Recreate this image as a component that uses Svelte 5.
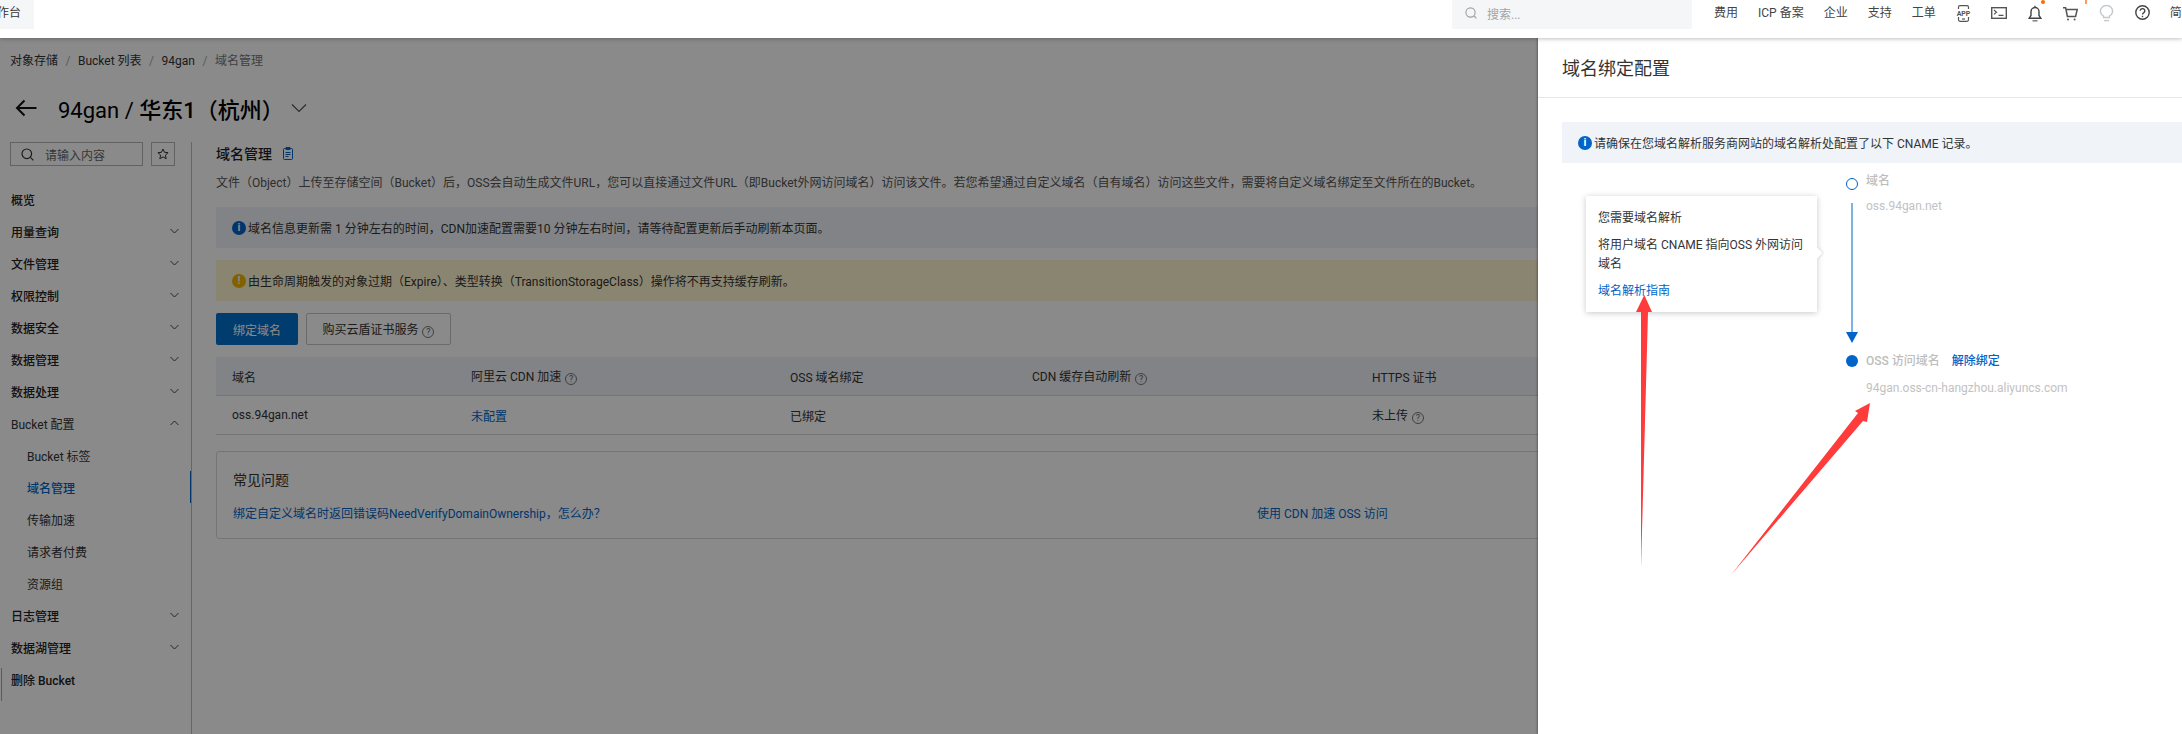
<script>
  const nav = [
    { label: "概览", bold: true },
    { label: "用量查询", bold: true, chevron: "down" },
    { label: "文件管理", bold: true, chevron: "down" },
    { label: "权限控制", bold: true, chevron: "down" },
    { label: "数据安全", bold: true, chevron: "down" },
    { label: "数据管理", bold: true, chevron: "down" },
    { label: "数据处理", bold: true, chevron: "down" },
    { label: "Bucket 配置", chevron: "up" },
    { label: "Bucket 标签", sub: true },
    { label: "域名管理", sub: true, active: true },
    { label: "传输加速", sub: true },
    { label: "请求者付费", sub: true },
    { label: "资源组", sub: true },
    { label: "日志管理", bold: true, chevron: "down" },
    { label: "数据湖管理", bold: true, chevron: "down" },
    { label: "删除 Bucket", bold: true },
  ];

  const topLinks = ["费用", "ICP 备案", "企业", "支持", "工单"];
  const crumbs = ["对象存储", "Bucket 列表", "94gan"];
</script>

<div class="app">
  <header class="topbar">
    <div class="tab"><span>工作台</span></div>
    <div class="search">
      <svg width="12" height="12" viewBox="0 0 12 12" fill="none" stroke="#9aa0a6" stroke-width="1.1">
        <circle cx="5.5" cy="5.5" r="4.6" />
        <path d="M9 9l2.4 2.4" />
      </svg>
      <span>搜索...</span>
    </div>
    <nav class="toplinks">
      {#each topLinks as link}
        <span>{link}</span>
      {/each}
      <svg class="ico" width="15" height="17" viewBox="0 0 15 17" fill="none" stroke="#555" stroke-width="1.2">
        <path d="M2.5 4V2.2Q2.5 .7 4 .7H11Q12.5 .7 12.5 2.2V4M2.5 12V14.8Q2.5 16.3 4 16.3H11Q12.5 16.3 12.5 14.8V12" />
        <path d="M6 14h3" />
        <text x="7.5" y="10.6" text-anchor="middle" class="app-t">APP</text>
      </svg>
      <svg class="ico term" width="16" height="12" viewBox="0 0 16 12" fill="none" stroke="#555" stroke-width="1.4">
        <rect x=".7" y=".7" width="14.6" height="10.6" />
        <path d="M3 3l2.5 2.2L3 7.4M7.5 8.4h5" stroke-width="1.2" />
      </svg>
      <span class="ico-wrap">
        <svg class="ico" width="16" height="17" viewBox="0 0 16 17" fill="none" stroke="#444" stroke-width="1.4">
          <path d="M2.2 13.2h11.6L12 10.5V6.5a4 4 0 0 0-8 0v4zM8 2.5V.8" />
          <path d="M5.5 15.8h5" stroke-width="1.6" stroke="#888" />
        </svg>
        <i class="dot"></i>
      </span>
      <span class="ico-wrap">
        <svg class="ico cart" width="15" height="14" viewBox="0 0 15 14" fill="none" stroke="#555" stroke-width="1.5">
          <path d="M0 .8h2.6l1.8 8.6h8.2L14.2 2.6H3" />
          <circle cx="5" cy="12.4" r="1" fill="#555" stroke="none" />
          <circle cx="11.6" cy="12.4" r="1" fill="#555" stroke="none" />
        </svg>
        <i class="bar"></i>
      </span>
      <svg class="ico" width="17" height="17" viewBox="0 0 17 17" fill="none" stroke="#c3c8cc" stroke-width="1.4">
        <path d="M5.5 12.5V11Q2.4 9.2 2.4 6.2a6 5.6 0 0 1 12.2 0Q14.6 9.2 11.5 11v1.5z" />
        <path d="M6 15.6h5" />
      </svg>
      <svg class="ico" width="15" height="15" viewBox="0 0 15 15" fill="none" stroke="#444" stroke-width="1.4">
        <circle cx="7.5" cy="7.5" r="6.7" />
        <path d="M5.2 5.8a2.3 2.2 0 1 1 3.6 1.9Q7.5 8.5 7.5 9.6" />
        <path d="M7.5 10.8v1.4" />
      </svg>
      <span>简体</span>
    </nav>
  </header>

  <div class="page">
    <div class="crumbs">
      {#each crumbs as c}
        <span>{c}</span><i>/</i>
      {/each}
      <span class="last">域名管理</span>
    </div>

    <div class="title">
      <svg width="22" height="18" viewBox="0 0 22 18" fill="none" stroke="#111" stroke-width="2">
        <path d="M21.5 9H2M9.5 1.5L2 9l7.5 7.5" />
      </svg>
      <h1>94gan / <b>华东1（杭州）</b></h1>
      <svg width="16" height="10" viewBox="0 0 16 10" fill="none" stroke="#555" stroke-width="1.2">
        <path d="M1 1.5l7 7 7-7" />
      </svg>
    </div>

    <div class="main">
      <aside class="side">
        <div class="side-top">
          <div class="side-search">
            <svg width="13" height="13" viewBox="0 0 13 13" fill="none" stroke="#333" stroke-width="1.2">
              <circle cx="5.8" cy="5.8" r="4.8" />
              <path d="M9.4 9.4l3 3" />
            </svg>
            <span>请输入内容</span>
          </div>
          <div class="star">
            <svg width="12" height="12" viewBox="0 0 12 12" fill="none" stroke="#333" stroke-width="1">
              <path d="M6 1l1.5 3.3 3.6.4-2.7 2.4.8 3.6L6 8.9l-3.2 1.8.8-3.6L.9 4.7l3.6-.4z" />
            </svg>
          </div>
        </div>
        <ul>
          {#each nav as item}
            <li class:bold={item.bold} class:sub={item.sub} class:active={item.active}>
              <span>{item.label}</span>
              {#if item.chevron}
                <svg class:up={item.chevron === "up"} width="9" height="6" viewBox="0 0 9 6" fill="none" stroke="#444" stroke-width="1">
                  <path d="M.5 1l4 4 4-4" />
                </svg>
              {/if}
            </li>
          {/each}
        </ul>
      </aside>

      <main class="content">
        <div class="head">
          <h2>域名管理</h2>
          <svg width="10" height="13" viewBox="0 0 10 13" fill="none" stroke="#0064c8" stroke-width="1">
            <rect x=".5" y="1.5" width="9" height="11" rx="1" />
            <path d="M3 .5h4v2H3zM2.5 5.5h5M2.5 7.5h5M2.5 9.5h3" />
          </svg>
        </div>
        <p class="desc">文件（Object）上传至存储空间（Bucket）后，OSS会自动生成文件URL，您可以直接通过文件URL（即Bucket外网访问域名）访问该文件。若您希望通过自定义域名（自有域名）访问这些文件，需要将自定义域名绑定至文件所在的Bucket。</p>

        <div class="notice info">
          <span class="badge blue">i</span>域名信息更新需 1 分钟左右的时间，CDN加速配置需要10 分钟左右时间，请等待配置更新后手动刷新本页面。
        </div>
        <div class="notice warn">
          <span class="badge amber">!</span>由生命周期触发的对象过期（Expire）、类型转换（TransitionStorageClass）操作将不再支持缓存刷新。
        </div>

        <div class="actions">
          <button class="primary">绑定域名</button>
          <button class="plain">购买云盾证书服务 <span class="q">?</span></button>
        </div>

        <div class="table">
          <div class="row th">
            <span>域名</span>
            <span>阿里云 CDN 加速 <span class="q">?</span></span>
            <span>OSS 域名绑定</span>
            <span>CDN 缓存自动刷新 <span class="q">?</span></span>
            <span>HTTPS 证书</span>
          </div>
          <div class="row">
            <span>oss.94gan.net</span>
            <span class="link">未配置</span>
            <span>已绑定</span>
            <span></span>
            <span>未上传 <span class="q">?</span></span>
          </div>
        </div>

        <section class="faq">
          <h3>常见问题</h3>
          <div class="faq-links">
            <span class="link">绑定自定义域名时返回错误码NeedVerifyDomainOwnership，怎么办？</span>
            <span class="link">使用 CDN 加速 OSS 访问</span>
          </div>
        </section>
      </main>
    </div>
  </div>

  <i class="handle"></i>
  <div class="mask"></div>

  <div class="drawer">
    <div class="drawer-head">域名绑定配置</div>
    <div class="drawer-body">
      <div class="notice info small">
        <span class="badge blue">i</span>请确保在您域名解析服务商网站的域名解析处配置了以下 CNAME 记录。
      </div>
      <div class="timeline">
        <span class="ring"></span>
        <strong>域名</strong>
        <svg class="rail" width="12" height="140" viewBox="0 0 12 140">
          <path d="M6 0V130" stroke="#0064c8" stroke-width="1" />
          <path d="M0 129H12L6 140z" fill="#0064c8" />
        </svg>
        <div class="val">oss.94gan.net</div>
        <span class="solid"></span>
        <div class="label2"><strong>OSS 访问域名</strong><a>解除绑定</a></div>
        <span></span>
        <div class="val second">94gan.oss-cn-hangzhou.aliyuncs.com</div>
      </div>
    </div>
    <div class="pop">
      <p>您需要域名解析</p>
      <p>将用户域名 CNAME 指向OSS 外网访问域名</p>
      <p class="link2">域名解析指南</p>
    </div>
  </div>

  <svg class="arrows" width="2182" height="734" viewBox="0 0 2182 734">
    <path d="M1641 568L1641 312H1636L1644.3 295L1652 312H1648z" fill="#ff3b3b" />
    <path d="M1731 575L1858 413L1855 411L1870 403L1867 422L1863 421z" fill="#ff3b3b" />
  </svg>
</div>

<style>
  :global(body) {
    margin: 0;
    background: #fff;
  }

  .app {
    position: relative;
    width: 2182px;
    height: 734px;
    overflow: hidden;
    background: #fff;
    color: #333;
    font-family: Roboto, "Noto Sans CJK SC", sans-serif;
    font-size: 12px;
  }

  /* top bar */
  .topbar {
    position: relative;
    z-index: 3;
    display: flex;
    align-items: flex-start;
    height: 38px;
    background: #fff;
    box-shadow: 0 1px 4px rgba(0, 0, 0, 0.25);
  }

  .tab {
    flex: none;
    display: flex;
    justify-content: flex-end;
    width: 34px;
    height: 29px;
    overflow: hidden;
    background: #f5f6f8;
    line-height: 26px;
    color: #333;
  }

  .tab span {
    flex: none;
    margin-right: 13px;
  }

  .search {
    flex: none;
    display: flex;
    align-items: center;
    gap: 10px;
    box-sizing: border-box;
    width: 240px;
    height: 29px;
    margin-left: 1418px;
    padding-left: 13px;
    padding-bottom: 3px;
    background: #f5f6f8;
    color: #a0a4a8;
  }

  .toplinks {
    flex: none;
    display: flex;
    align-items: flex-start;
    gap: 20px;
    margin-left: 22px;
    white-space: nowrap;
    line-height: 26px;
    color: #444;
  }

  .ico {
    display: block;
    margin-top: 5px;
  }

  .ico.term {
    margin-top: 7px;
  }

  .ico.cart {
    margin-top: 7px;
  }

  .ico-wrap {
    position: relative;
    display: block;
  }

  .app-t {
    font-size: 7px;
    font-weight: 700;
    fill: #555;
    stroke: none;
  }

  .dot {
    position: absolute;
    top: 0;
    left: 14px;
    width: 4px;
    height: 4px;
    border-radius: 50%;
    background: #ff6a00;
  }

  .bar {
    position: absolute;
    top: 0;
    left: 22px;
    width: 2px;
    height: 4px;
    background: #ff9a5c;
  }

  /* page */
  .page {
    padding-top: 14px;
  }

  .crumbs {
    display: flex;
    gap: 7.5px;
    height: 18px;
    padding-left: 10px;
    line-height: 18px;
    color: #333;
  }

  .crumbs i {
    font-style: normal;
    color: #aaa;
  }

  .crumbs .last {
    color: #777;
  }

  .title {
    display: flex;
    align-items: center;
    height: 30px;
    margin-top: 23px;
    padding-left: 15px;
  }

  .title h1 {
    margin: 0 7px 0 21px;
    font-size: 22px;
    font-weight: 400;
    color: #000;
    white-space: nowrap;
  }

  .title b {
    font-weight: 500;
  }

  .main {
    display: flex;
    margin-top: 19px;
    height: 592px;
  }

  .side {
    box-sizing: border-box;
    flex: none;
    width: 192px;
    padding-left: 10px;
    border-right: 1px solid #bdbdbd;
  }

  .side-top {
    display: flex;
    gap: 8px;
  }

  .side-search {
    display: flex;
    align-items: center;
    gap: 11px;
    box-sizing: border-box;
    width: 133px;
    height: 24px;
    padding-left: 10px;
    border: 1px solid #b5b5b5;
    color: #666;
  }

  .star {
    display: flex;
    align-items: center;
    justify-content: center;
    box-sizing: border-box;
    width: 24px;
    height: 24px;
    border: 1px solid #b5b5b5;
  }

  .side ul {
    margin: 17px 0 0;
    padding: 0;
    list-style: none;
  }

  .side li {
    position: relative;
    display: flex;
    align-items: center;
    justify-content: space-between;
    height: 32px;
    padding: 0 12px 0 1px;
  }

  .side li.bold {
    font-weight: 500;
    color: #222;
  }

  .side li.sub {
    padding-left: 17px;
  }

  .side li.active {
    color: #0064c8;
    font-weight: 500;
  }

  .side li.active::after {
    content: "";
    position: absolute;
    top: 0;
    right: 0;
    width: 1px;
    height: 32px;
    background: #0064c8;
  }

  .side svg.up {
    transform: rotate(180deg);
  }

  .content {
    flex: 1;
    min-width: 0;
    padding: 0 0 0 24px;
  }

  .head {
    display: flex;
    align-items: center;
    gap: 11px;
    height: 22px;
  }

  .head h2 {
    margin: 0;
    font-size: 14px;
    font-weight: 500;
    color: #222;
  }

  .desc {
    margin: 9px 0 0;
    line-height: 20px;
    white-space: nowrap;
    color: #555;
  }

  .notice {
    display: flex;
    align-items: center;
    height: 41px;
    padding-left: 16px;
    white-space: nowrap;
  }

  .info {
    margin-top: 14px;
    background: #f0f3f8;
  }

  .warn {
    margin-top: 12px;
    background: #fff6cf;
  }

  .small {
    margin-top: 0;
  }

  .badge {
    flex: none;
    display: block;
    width: 14px;
    height: 14px;
    margin-right: 2px;
    border-radius: 50%;
    text-align: center;
    font-size: 11px;
    line-height: 14px;
    font-weight: 700;
    color: #fff;
  }

  .blue {
    background: #0064c8;
  }

  .amber {
    background: #f0b400;
  }

  .actions {
    display: flex;
    gap: 8px;
    margin-top: 12px;
  }

  button {
    box-sizing: border-box;
    height: 32px;
    padding: 0;
    border-radius: 2px;
    font: inherit;
  }

  .primary {
    width: 82px;
    border: 0;
    background: #0070cc;
    color: #fff;
  }

  .plain {
    width: 145px;
    border: 1px solid #c4c4c4;
    background: #fff;
    color: #333;
  }

  .q {
    display: inline-block;
    box-sizing: border-box;
    width: 12px;
    height: 12px;
    margin-left: 1px;
    border: 1px solid #777;
    border-radius: 50%;
    text-align: center;
    vertical-align: -1px;
    font-size: 9px;
    line-height: 10px;
    color: #666;
  }

  .table {
    margin-top: 12px;
  }

  .row {
    display: grid;
    grid-template-columns: 239px 319px 242px 340px 1fr;
    align-items: center;
    height: 38px;
    padding-left: 16px;
    border-bottom: 1px solid #d9d9d9;
  }

  .th {
    background: #f0f3f8;
  }

  .link {
    color: #0064c8;
  }

  .faq {
    box-sizing: border-box;
    height: 88px;
    margin-top: 16px;
    padding: 18px 16px 0;
    border: 1px solid #d9d9d9;
    border-radius: 3px;
  }

  .faq h3 {
    margin: 0;
    font-size: 14px;
    font-weight: 400;
    line-height: 20px;
    color: #333;
  }

  .faq-links {
    display: grid;
    grid-template-columns: 1024px 1fr;
    margin-top: 14px;
    line-height: 20px;
  }

  .handle {
    position: absolute;
    top: 668px;
    left: 0;
    width: 1px;
    height: 33px;
    border-right: 1px solid #aaa;
  }

  /* overlay and drawer */
  .mask {
    position: absolute;
    z-index: 1;
    inset: 38px 0 0 0;
    background: rgba(0, 0, 0, 0.46);
  }

  .drawer {
    position: absolute;
    z-index: 2;
    top: 38px;
    left: 1538px;
    bottom: 0;
    width: 644px;
    background: #fff;
    box-shadow: -1px 0 2px rgba(0, 0, 0, 0.3);
  }

  .drawer-head {
    box-sizing: border-box;
    height: 60px;
    padding: 19px 0 0 24px;
    border-bottom: 1px solid #e6e6e6;
    font-size: 18px;
    line-height: 24px;
    color: #333;
  }

  .drawer-body {
    padding: 24px 0 0 24px;
  }

  .timeline {
    display: grid;
    grid-template-columns: 12px 1fr;
    grid-template-rows: 18px 162px 18px 27px;
    column-gap: 8px;
    margin: 9px 0 0 284px;
    line-height: 18px;
    color: #c2c2c2;
  }

  .timeline strong {
    font-weight: 500;
    color: #bdbdbd;
  }

  .ring {
    box-sizing: border-box;
    width: 12px;
    height: 12px;
    margin-top: 6px;
    border: 1.5px solid #0064c8;
    border-radius: 50%;
  }

  .solid {
    width: 12px;
    height: 12px;
    margin-top: 3px;
    border-radius: 50%;
    background: #0064c8;
  }

  .rail {
    display: block;
    margin-top: 13px;
  }

  .val {
    margin-top: 7px;
  }

  .val.second {
    margin-top: 9px;
  }

  .label2 {
    display: flex;
    gap: 12px;
  }

  .label2 a {
    font-weight: 500;
    color: #0064c8;
  }

  .pop {
    position: absolute;
    top: 158px;
    left: 48px;
    box-sizing: border-box;
    width: 231px;
    height: 116px;
    padding: 12.5px 12px 0;
    background: #fff;
    box-shadow: 0 1px 6px rgba(0, 0, 0, 0.22);
    line-height: 19px;
  }

  .pop::after {
    content: "";
    position: absolute;
    top: 53px;
    right: -4px;
    width: 8px;
    height: 8px;
    background: #fff;
    box-shadow: 1px -1px 2px rgba(0, 0, 0, 0.1);
    transform: rotate(45deg);
  }

  .pop p {
    margin: 0 0 8px;
  }

  .link2 {
    color: #0064c8;
  }

  .arrows {
    position: absolute;
    z-index: 4;
    top: 0;
    left: 0;
    pointer-events: none;
  }
</style>
